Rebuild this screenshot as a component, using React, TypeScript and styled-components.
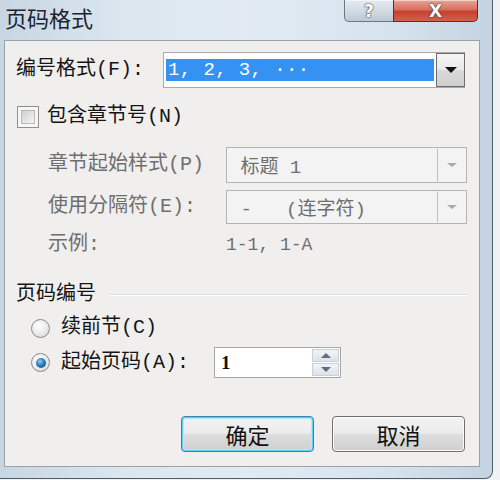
import React from "react";
import styled, { createGlobalStyle } from "styled-components";

const Global = createGlobalStyle`
  html, body { margin: 0; padding: 0; }
  body {
    width: 500px;
    height: 480px;
    overflow: hidden;
    background: #eef2f5;
    font-family: "Liberation Mono", "Noto Sans CJK SC", monospace;
  }
`;

const Window = styled.div`
  width: 493px;
  height: 479px;
  box-sizing: border-box;
  border-right: 1px solid #4f5d6b;
  border-bottom: 1px solid #4f5d6b;
  border-bottom-right-radius: 8px;
  background: linear-gradient(90deg, #c8d6e3 0%, #dbe6ef 25%, #e2ebf3 50%, #d6e2ed 80%, #c4d3e1 100%);
  display: flex;
  flex-direction: column;
  overflow: hidden;
`;

const TitleBar = styled.div`
  height: 40px;
  display: flex;
  align-items: flex-start;
  justify-content: space-between;
  padding: 0 14px 0 5px;
  flex-shrink: 0;
`;

const Title = styled.div`
  margin-top: 3px;
  font-family: "Noto Sans CJK SC", sans-serif;
  font-size: 22px;
  font-weight: 400;
  color: #1c2430;
  line-height: 28px;
`;

const Caption = styled.div`
  display: flex;
  height: 22px;
`;

const CapButton = styled.div<{ $kind: "help" | "close" }>`
  box-sizing: border-box;
  width: ${(p) => (p.$kind === "help" ? 49 : 85)}px;
  height: 22px;
  border: 1px solid ${(p) => (p.$kind === "help" ? "#6b7886" : "#5e2e27")};
  border-top: none;
  ${(p) => (p.$kind === "help" ? "border-right: none;" : "")}
  border-radius: ${(p) => (p.$kind === "help" ? "0 0 0 5px" : "0 0 5px 0")};
  background: ${(p) =>
    p.$kind === "help"
      ? "linear-gradient(180deg, #e4eaf0 0%, #d2dbe4 50%, #bcc8d4 100%)"
      : "linear-gradient(180deg, #e9a597 0%, #d8705f 45%, #c7412e 55%, #d2604c 100%)"};
  display: flex;
  align-items: center;
  justify-content: center;
  font-family: "DejaVu Sans", sans-serif;
  font-weight: bold;
  color: #fff;
  font-size: ${(p) => (p.$kind === "help" ? 17 : 17)}px;
  text-shadow: 0 0 2px #3a3a3a, 0 0 1px #222;
  box-shadow: inset 0 1px 0 rgba(255, 255, 255, 0.5);
`;

const Client = styled.div`
  margin-left: 4px;
  width: 476px;
  height: 427px;
  box-sizing: border-box;
  border: 1px solid #96a2ae;
  background: #f0efee;
  display: flex;
  flex-direction: column;
  padding: 0 12px 0 11px;
  flex-shrink: 0;
`;

const Row = styled.div<{ $top: number; $h: number; $indent?: number }>`
  display: flex;
  align-items: center;
  margin-top: ${(p) => p.$top}px;
  height: ${(p) => p.$h}px;
  padding-left: ${(p) => p.$indent ?? 0}px;
  flex-shrink: 0;
`;

const Label = styled.div<{ $w?: number; $disabled?: boolean }>`
  ${(p) => (p.$w ? `width: ${p.$w}px; flex-shrink: 0;` : "")}
  font-size: 20px;
  line-height: 24px;
  color: ${(p) => (p.$disabled ? "#6e6e6e" : "#141414")};
  white-space: nowrap;
`;

const Combo = styled.div<{ $w: number; $disabled?: boolean }>`
  width: ${(p) => p.$w}px;
  height: 100%;
  box-sizing: border-box;
  border: 1px solid ${(p) => (p.$disabled ? "#b4b4b4" : "#a9a9a9")};
  background: ${(p) => (p.$disabled ? "#f3f3f3" : "#ffffff")};
  display: flex;
  align-items: stretch;
`;

const Field = styled.div<{ $disabled?: boolean }>`
  flex: 1;
  display: flex;
  align-items: center;
  padding: 0 2px;
  font-size: 19px;
  color: ${(p) => (p.$disabled ? "#6e6e6e" : "#141414")};
  white-space: nowrap;
`;

const Selection = styled.div`
  flex: 1;
  height: 22px;
  background: #3592f3;
  color: #fff;
  font-size: 19px;
  line-height: 22px;
  padding-left: 2px;
  letter-spacing: 0.4px;
`;

const DropButton = styled.div<{ $disabled?: boolean }>`
  width: 29px;
  box-sizing: border-box;
  margin: ${(p) => (p.$disabled ? "0" : "0 -1px 0 0")};
  border: 1px solid ${(p) => (p.$disabled ? "transparent" : "#6d6d6d")};
  border-left: 1px solid ${(p) => (p.$disabled ? "#c0c0c0" : "#6d6d6d")};
  background: ${(p) =>
    p.$disabled
      ? "#f3f3f3"
      : "linear-gradient(180deg, #f4f4f4 0%, #e9e9e9 50%, #d9d9d9 51%, #cfcfcf 100%)"};
  display: flex;
  align-items: center;
  justify-content: center;
`;

const Arrow = styled.div<{ $disabled?: boolean }>`
  width: 0;
  height: 0;
  border-left: ${(p) => (p.$disabled ? 5 : 6)}px solid transparent;
  border-right: ${(p) => (p.$disabled ? 5 : 6)}px solid transparent;
  border-top: ${(p) => (p.$disabled ? 4 : 6)}px solid ${(p) => (p.$disabled ? "#a9a9a9" : "#111")};
`;

const CheckBox = styled.div`
  width: 22px;
  height: 22px;
  box-sizing: border-box;
  margin-left: 1px;
  margin-right: 8px;
  border: 1px solid #8e8f8f;
  background: #f6f6f6;
  padding: 3px;
  &::after {
    content: "";
    display: block;
    width: 100%;
    height: 100%;
    box-sizing: border-box;
    border: 1px solid #b9b9b9;
    background: linear-gradient(135deg, #cfcfcf 0%, #e6e6e6 60%, #f4f4f4 100%);
  }
`;

const Example = styled.div`
  font-size: 18px;
  color: #6e6e6e;
  white-space: nowrap;
`;

const GroupHeader = styled.div`
  flex: 1;
  display: flex;
  align-items: center;
  gap: 14px;
`;

const GroupLine = styled.div`
  flex: 1;
  height: 1px;
  background: #d5dce2;
  border-bottom: 1px solid #ffffff;
`;

const Radio = styled.div<{ $checked?: boolean }>`
  width: 19px;
  height: 19px;
  box-sizing: border-box;
  border-radius: 50%;
  border: 1px solid #8a8a8a;
  background: radial-gradient(circle at 40% 35%, #ffffff 0%, #e9e9e9 55%, #cfcfcf 100%);
  margin-right: 11px;
  display: flex;
  align-items: center;
  justify-content: center;
  flex-shrink: 0;
  &::after {
    content: "";
    display: ${(p) => (p.$checked ? "block" : "none")};
    width: 10px;
    height: 10px;
    border-radius: 50%;
    background: radial-gradient(circle at 40% 35%, #8fd0f4 0%, #2a7fb8 45%, #0f3f6a 100%);
  }
`;

const Spin = styled.div`
  width: 127px;
  height: 31px;
  box-sizing: border-box;
  border: 1px solid #a7a7a7;
  background: #fff;
  display: flex;
  align-items: stretch;
  padding: 1px;
`;

const SpinText = styled.div`
  flex: 1;
  display: flex;
  align-items: center;
  padding-left: 5px;
  font-family: "Liberation Serif", serif;
  font-weight: bold;
  font-size: 19px;
  color: #111;
`;

const SpinButtons = styled.div`
  width: 27px;
  display: flex;
  flex-direction: column;
  gap: 1px;
`;

const SpinHalf = styled.div<{ $up?: boolean }>`
  flex: 1;
  background: linear-gradient(180deg, #f2f4f7 0%, #dde3ea 100%);
  border: 1px solid #c9d0d8;
  display: flex;
  align-items: center;
  justify-content: center;
  &::after {
    content: "";
    width: 0;
    height: 0;
    border-left: 5px solid transparent;
    border-right: 5px solid transparent;
    ${(p) => (p.$up ? "border-bottom: 5px solid #5c6e85;" : "border-top: 5px solid #5c6e85;")}
  }
`;

const ButtonRow = styled.div`
  display: flex;
  justify-content: flex-end;
  gap: 18px;
  margin-top: 38px;
  margin-right: 2px;
  height: 36px;
`;

const Button = styled.div<{ $default?: boolean }>`
  width: 133px;
  height: 36px;
  box-sizing: border-box;
  border-radius: 4px;
  border: 1px solid ${(p) => (p.$default ? "#3c7fb1" : "#707070")};
  box-shadow: ${(p) => (p.$default ? "inset 0 0 0 1px #5fd0f7, inset 0 0 0 2px #b9e6f7" : "inset 0 0 0 1px #fbfbfb")};
  background: linear-gradient(180deg, #f3f3f3 0%, #ebebeb 48%, #dddddd 52%, #cfcfcf 100%);
  display: flex;
  align-items: center;
  justify-content: center;
  font-family: "Noto Sans CJK SC", sans-serif;
  font-size: 22px;
  color: #111;
`;

export default function App() {
  return (
    <>
      <Global />
      <Window>
        <TitleBar>
          <Title>页码格式</Title>
          <Caption>
            <CapButton $kind="help">?</CapButton>
            <CapButton $kind="close">X</CapButton>
          </Caption>
        </TitleBar>
        <Client>
          <Row $top={11} $h={36}>
            <Label $w={147}>编号格式(F):</Label>
            <Combo $w={302}>
              <Field>
                <Selection>1, 2, 3, ···</Selection>
              </Field>
              <DropButton>
                <Arrow />
              </DropButton>
            </Combo>
          </Row>
          <Row $top={17} $h={24}>
            <CheckBox />
            <Label>包含章节号(N)</Label>
          </Row>
          <Row $top={18} $h={36} $indent={32}>
            <Label $w={178} $disabled>章节起始样式(P)</Label>
            <Combo $w={241} $disabled>
              <Field $disabled>&nbsp;标题 1</Field>
              <DropButton $disabled>
                <Arrow $disabled />
              </DropButton>
            </Combo>
          </Row>
          <Row $top={7} $h={34} $indent={32}>
            <Label $w={178} $disabled>使用分隔符(E):</Label>
            <Combo $w={241} $disabled>
              <Field $disabled>&nbsp;-&nbsp;&nbsp;&nbsp;(连字符)</Field>
              <DropButton $disabled>
                <Arrow $disabled />
              </DropButton>
            </Combo>
          </Row>
          <Row $top={9} $h={24} $indent={32}>
            <Label $w={178} $disabled>示例:</Label>
            <Example>1-1, 1-A</Example>
          </Row>
          <Row $top={26} $h={24}>
            <GroupHeader>
              <Label>页码编号</Label>
              <GroupLine />
            </GroupHeader>
          </Row>
          <Row $top={9} $h={24} $indent={15}>
            <Radio />
            <Label>续前节(C)</Label>
          </Row>
          <Row $top={7} $h={31} $indent={15}>
            <Radio $checked />
            <Label $w={153}>起始页码(A):</Label>
            <Spin>
              <SpinText>1</SpinText>
              <SpinButtons>
                <SpinHalf $up />
                <SpinHalf />
              </SpinButtons>
            </Spin>
          </Row>
          <ButtonRow>
            <Button $default>确定</Button>
            <Button>取消</Button>
          </ButtonRow>
        </Client>
      </Window>
    </>
  );
}
